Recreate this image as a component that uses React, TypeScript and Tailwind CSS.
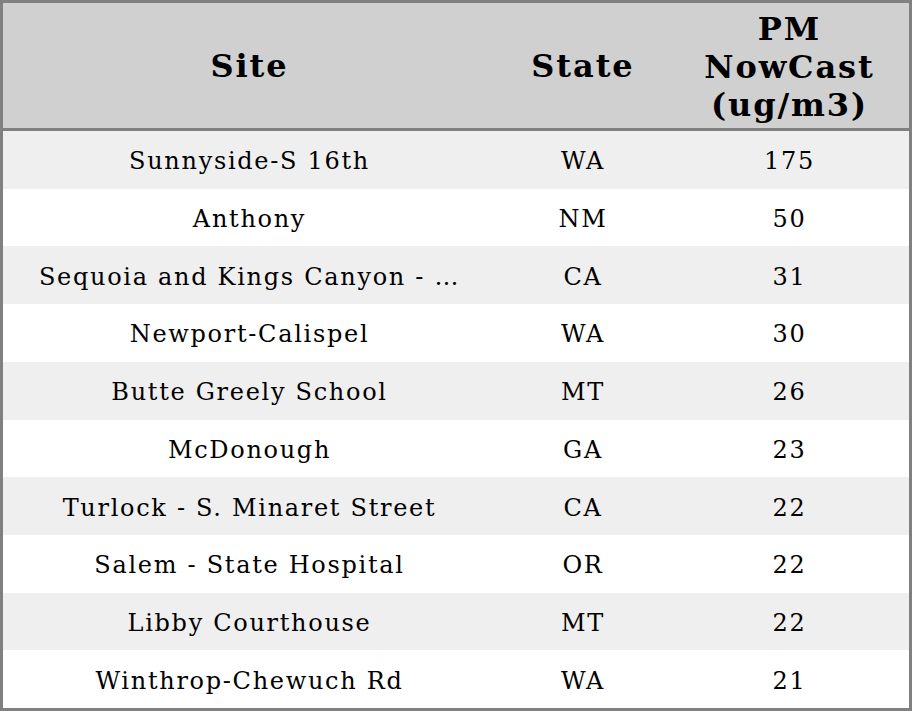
const rows = [
  { site: "Sunnyside-S 16th", state: "WA", pm: "175" },
  { site: "Anthony", state: "NM", pm: "50" },
  { site: "Sequoia and Kings Canyon - …", state: "CA", pm: "31" },
  { site: "Newport-Calispel", state: "WA", pm: "30" },
  { site: "Butte Greely School", state: "MT", pm: "26" },
  { site: "McDonough", state: "GA", pm: "23" },
  { site: "Turlock - S. Minaret Street", state: "CA", pm: "22" },
  { site: "Salem - State Hospital", state: "OR", pm: "22" },
  { site: "Libby Courthouse", state: "MT", pm: "22" },
  { site: "Winthrop-Chewuch Rd", state: "WA", pm: "21" },
]

export default function App() {
  return (
    <div
      className="flex h-[711px] w-[912px] flex-col border-[3px] border-[#808080] bg-white text-black"
      style={{ fontFamily: '"DejaVu Serif", serif' }}
    >
      {/* header */}
      <div className="grid h-[128px] shrink-0 grid-cols-[493px_174px_239px] border-b-[3px] border-[#808080] bg-[#d0d0d0] text-[32px] font-bold leading-[38px] tracking-[1.9px]">
        <div className="flex items-center justify-center">Site</div>
        <div className="flex items-center justify-center">State</div>
        <div className="flex items-center justify-center pt-[2px] text-center">
          PM
          <br />
          NowCast
          <br />
          (ug/m3)
        </div>
      </div>

      {/* body */}
      <div className="grid flex-1 grid-rows-10">
        {rows.map((row, i) => (
          <div
            key={i}
            className={`grid grid-cols-[493px_174px_239px] pt-[3px] text-[24px] tracking-[1.7px] ${i % 2 === 0 ? "bg-[#efefef]" : "bg-white"}`}
          >
            <div className="flex items-center justify-center whitespace-nowrap">{row.site}</div>
            <div className="flex items-center justify-center">{row.state}</div>
            <div className="flex items-center justify-center">{row.pm}</div>
          </div>
        ))}
      </div>
    </div>
  )
}
